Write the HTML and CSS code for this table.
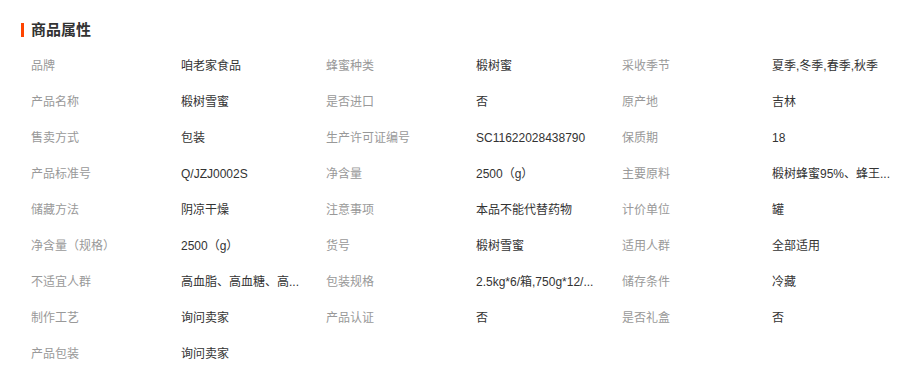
FILE: index.html
```html
<!DOCTYPE html>
<html lang="zh-CN">
<head>
<meta charset="utf-8">
<link rel="stylesheet" href="styles.css">
</head>
<body>
<div class="attrs">
  <h2 class="attrs-title"><span class="bar"></span>商品属性</h2>
  <ul class="attr-list">
    <li><span class="k">品牌</span><span class="v">咱老家食品</span></li>
    <li><span class="k">蜂蜜种类</span><span class="v">椴树蜜</span></li>
    <li><span class="k">采收季节</span><span class="v">夏季,冬季,春季,秋季</span></li>
    <li><span class="k">产品名称</span><span class="v">椴树雪蜜</span></li>
    <li><span class="k">是否进口</span><span class="v">否</span></li>
    <li><span class="k">原产地</span><span class="v">吉林</span></li>
    <li><span class="k">售卖方式</span><span class="v">包装</span></li>
    <li><span class="k">生产许可证编号</span><span class="v">SC11622028438790</span></li>
    <li><span class="k">保质期</span><span class="v">18</span></li>
    <li><span class="k">产品标准号</span><span class="v">Q/JZJ0002S</span></li>
    <li><span class="k">净含量</span><span class="v">2500（g）</span></li>
    <li><span class="k">主要原料</span><span class="v" title="椴树蜂蜜95%、蜂王浆5%">椴树蜂蜜95%、蜂王...</span></li>
    <li><span class="k">储藏方法</span><span class="v">阴凉干燥</span></li>
    <li><span class="k">注意事项</span><span class="v">本品不能代替药物</span></li>
    <li><span class="k">计价单位</span><span class="v">罐</span></li>
    <li><span class="k">净含量（规格）</span><span class="v">2500（g）</span></li>
    <li><span class="k">货号</span><span class="v">椴树雪蜜</span></li>
    <li><span class="k">适用人群</span><span class="v">全部适用</span></li>
    <li><span class="k">不适宜人群</span><span class="v" title="高血脂、高血糖、高血压人群">高血脂、高血糖、高...</span></li>
    <li><span class="k">包装规格</span><span class="v" title="2.5kg*6/箱,750g*12/箱">2.5kg*6/箱,750g*12/...</span></li>
    <li><span class="k">储存条件</span><span class="v">冷藏</span></li>
    <li><span class="k">制作工艺</span><span class="v">询问卖家</span></li>
    <li><span class="k">产品认证</span><span class="v">否</span></li>
    <li><span class="k">是否礼盒</span><span class="v">否</span></li>
    <li><span class="k">产品包装</span><span class="v">询问卖家</span></li>
  </ul>
</div>
</body>
</html>
```
FILE: styles.css
```css
* { box-sizing: border-box; }
html, body { margin: 0; padding: 0; background: #fff; }
body {
  font-family: "Liberation Sans", "Noto Sans CJK SC", sans-serif;
  font-size: 12px;
  color: #333;
}
.attrs { padding: 23px 0 0 21px; }
.attrs-title {
  display: flex;
  align-items: center;
  height: 14px;
  margin: 0;
  font-size: 15px;
  font-weight: bold;
  color: #333;
  line-height: 14px;
}
.bar {
  display: inline-block;
  width: 3px;
  height: 14px;
  background: #ff4400;
  margin-right: 7px;
}
.attr-list {
  list-style: none;
  margin: 11px 0 0 10px;
  padding: 0;
  display: grid;
  grid-template-columns: 295px 296px 280px;
}
.attr-list li {
  display: flex;
  height: 36px;
  line-height: 36px;
  white-space: nowrap;
}
.k {
  width: 150px;
  flex: none;
  color: #999;
}
.v {
  color: #333;
}
```
